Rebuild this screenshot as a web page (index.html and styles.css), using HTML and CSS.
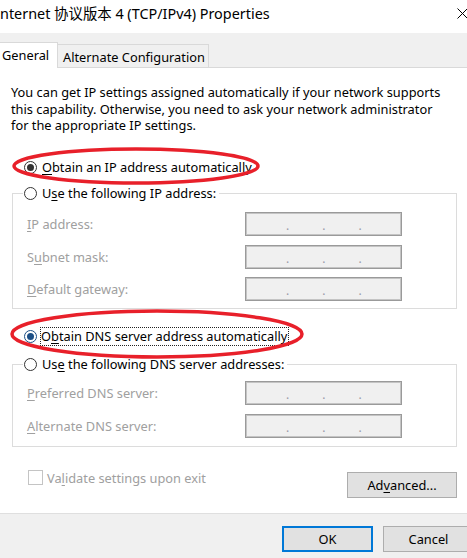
FILE: index.html
```html
<!DOCTYPE html>
<html lang="en">
<head>
<meta charset="utf-8">
<title>Internet Protocol Version 4 (TCP/IPv4) Properties</title>
<link rel="stylesheet" href="styles.css">
</head>
<body>
<div class="window">
  <header class="titlebar">
    <span class="title">nternet 协议版本 4 (TCP/IPv4) Properties</span>
    <svg class="close" width="11" height="11" viewBox="0 0 11 11" aria-hidden="true"><path d="M0.5 0.5 L10.5 10.5 M10.5 0.5 L0.5 10.5" stroke="#000" stroke-width="1" fill="none"/></svg>
  </header>

  <nav class="tabs">
    <div class="tab active">General</div>
    <div class="tab">Alternate Configuration</div>
  </nav>

  <main class="panel">
    <p class="intro">You can get IP settings assigned automatically if your network supports this capability. Otherwise, you need to ask your network administrator for the appropriate IP settings.</p>

    <div class="radio-row first">
      <span class="radio checked"></span>
      <span class="rlabel"><u>O</u>btain an IP address automatically</span>
    </div>

    <fieldset class="group group-ip">
      <legend>
        <span class="radio-row">
          <span class="radio"></span>
          <span class="rlabel">U<u>s</u>e the following IP address:</span>
        </span>
      </legend>
      <div class="fields">
        <span class="flabel"><u>I</u>P address:</span>
        <div class="ipbox"><span>.</span><span>.</span><span>.</span></div>
        <span class="flabel">S<u>u</u>bnet mask:</span>
        <div class="ipbox"><span>.</span><span>.</span><span>.</span></div>
        <span class="flabel"><u>D</u>efault gateway:</span>
        <div class="ipbox"><span>.</span><span>.</span><span>.</span></div>
      </div>
    </fieldset>

    <div class="radio-row dns-auto">
      <span class="radio checked focused"></span>
      <span class="rlabel focus">O<u>b</u>tain DNS server address automatically</span>
    </div>

    <fieldset class="group group-dns">
      <legend>
        <span class="radio-row">
          <span class="radio"></span>
          <span class="rlabel">Us<u>e</u> the following DNS server addresses:</span>
        </span>
      </legend>
      <div class="fields">
        <span class="flabel"><u>P</u>referred DNS server:</span>
        <div class="ipbox"><span>.</span><span>.</span><span>.</span></div>
        <span class="flabel"><u>A</u>lternate DNS server:</span>
        <div class="ipbox"><span>.</span><span>.</span><span>.</span></div>
      </div>
    </fieldset>

    <div class="bottom-row">
      <div class="check"><span class="box"></span><span class="clabel">Va<u>l</u>idate settings upon exit</span></div>
      <button class="btn advanced">Ad<u>v</u>anced...</button>
    </div>
  </main>

  <footer class="footer">
    <button class="btn default">OK</button>
    <button class="btn">Cancel</button>
  </footer>

  <svg class="annot" width="467" height="558" viewBox="0 0 467 558" aria-hidden="true">
    <ellipse cx="136" cy="166" rx="122" ry="17" fill="none" stroke="#e8202a" stroke-width="3.5"/>
    <ellipse cx="157" cy="334" rx="145" ry="23" fill="none" stroke="#e8202a" stroke-width="3.5"/>
  </svg>
</div>
</body>
</html>
```

FILE: styles.css
```css
html, body {
  margin: 0;
  padding: 0;
}

body {
  width: 467px;
  height: 558px;
  overflow: hidden;
  background: #f0f0f0;
  font-family: "Noto Sans", "Noto Sans CJK SC", sans-serif;
  font-size: 12.8px;
  color: #000;
}

.window {
  position: relative;
  width: 467px;
  height: 558px;
  overflow: hidden;
  display: flex;
  flex-direction: column;
}

u {
  text-decoration: underline;
  text-underline-offset: 2px;
}

/* Title bar */
.titlebar {
  height: 33px;
  flex: none;
  background: #fff;
  display: flex;
  align-items: flex-start;
  justify-content: space-between;
  box-sizing: border-box;
}

.title {
  font-size: 14.4px;
  line-height: 18px;
  margin-top: 5px;
  white-space: nowrap;
}

.close {
  margin-top: 8px;
  margin-right: -1px;
  flex: none;
}

/* Tabs */
.tabs {
  height: 35px;
  flex: none;
  box-sizing: border-box;
  border-bottom: 1px solid #d9d9d9;
  display: flex;
  align-items: flex-end;
}

.tab {
  box-sizing: border-box;
  border: 1px solid #d9d9d9;
  border-bottom: none;
  display: flex;
  align-items: center;
  white-space: nowrap;
}

.tab.active {
  width: 58px;
  height: 26px;
  margin-bottom: -1px;
  background: #fff;
  border-left: none;
  padding-left: 2px;
  padding-bottom: 1px;
}

.tab:not(.active) {
  width: 151px;
  height: 23px;
  border-left: none;
  padding-left: 5px;
  padding-top: 2px;
}

/* Panel */
.panel {
  height: 445px;
  flex: none;
  box-sizing: border-box;
  background: #fff;
  padding: 16px 10px 0 12px;
}

.intro {
  margin: 0 0 0 -1px;
  line-height: 16.5px;
  width: 436px;
}

.radio-row {
  display: flex;
  align-items: center;
  height: 18px;
  white-space: nowrap;
}

.radio-row.first {
  margin-top: 24.5px;
  padding-left: 12px;
}

.radio-row.dns-auto {
  margin-top: 18px;
  padding-left: 12px;
}

.radio {
  width: 13px;
  height: 13px;
  box-sizing: border-box;
  border: 1px solid #333;
  border-radius: 50%;
  background: #fff;
  flex: none;
  display: flex;
  align-items: center;
  justify-content: center;
  margin-right: 5px;
}

.radio.checked::after {
  content: "";
  width: 7px;
  height: 7px;
  border-radius: 50%;
  background: #333;
}

.radio.focused {
  border-color: #1c4f86;
}

.radio.focused::after {
  background: #1c4f86;
}

.rlabel.focus {
  outline: 1px dotted #222;
  outline-offset: 0;
  padding: 0 1px 0 0;
  margin-left: -1px;
  line-height: 17px;
}

/* Group boxes */
.group {
  margin: 0;
  border: 1px solid #dcdcdc;
  padding: 10px 0 7px 0;
  min-width: 0;
}

.group-ip {
  margin-top: 8px;
}

.group-dns {
  margin-top: 10px;
  padding-top: 8px;
  padding-bottom: 8px;
}

.group legend {
  margin-left: 10px;
  padding: 0 3px 0 1px;
}

.fields {
  display: grid;
  grid-template-columns: 218px 157px;
  row-gap: 8.5px;
  padding-left: 14px;
  align-items: center;
}

.flabel {
  color: #a0a0a0;
  white-space: nowrap;
}

.ipbox {
  height: 24px;
  box-sizing: border-box;
  border: 1px solid #9a9a9a;
  box-shadow: inset 0 0 0 1px #c4c4c4;
  background: #f0f0f0;
  display: flex;
  align-items: flex-end;
  padding-left: 40px;
  gap: 33px;
  color: #9a9aa8;
  font-size: 12px;
  line-height: 19px;
}

/* Bottom row */
.bottom-row {
  margin-top: 23px;
  padding-left: 16px;
  display: flex;
  justify-content: space-between;
  align-items: flex-start;
}

.check {
  display: flex;
  align-items: center;
  height: 16px;
  color: #a0a0a0;
}

.box {
  width: 15px;
  height: 15px;
  box-sizing: border-box;
  border: 1px solid #c4c4c4;
  background: #fff;
  margin-right: 4px;
}

.btn {
  font: inherit;
  color: #000;
  background: #e1e1e1;
  border: 1px solid #adadad;
  border-radius: 0;
  padding: 0;
  box-sizing: border-box;
  height: 26px;
  width: 91px;
}

.btn.advanced {
  width: 110px;
  margin-top: 2px;
}

.btn.default {
  border: 2px solid #0078d7;
}

/* Footer */
.footer {
  flex: 1;
  box-sizing: border-box;
  border-top: 1px solid #dfdfdf;
  padding-top: 12px;
  display: flex;
  justify-content: flex-end;
  align-items: flex-start;
  gap: 10px;
  margin-right: -7px;
}

/* Annotation overlay (red hand-drawn ellipses over the dialog) */
.annot {
  position: absolute;
  left: 0;
  top: 0;
  pointer-events: none;
}
```
